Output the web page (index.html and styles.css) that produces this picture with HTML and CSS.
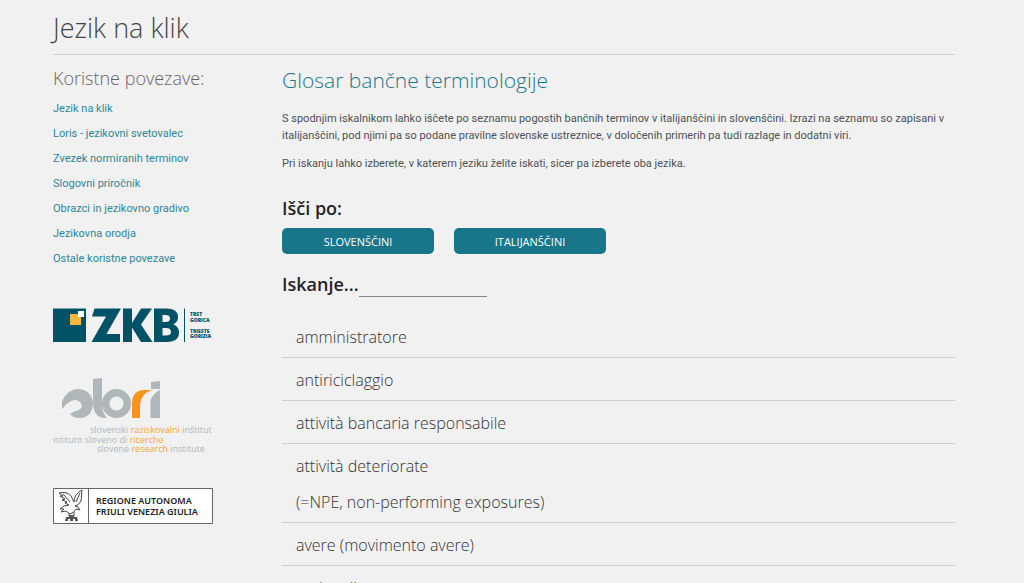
FILE: index.html
```html
<!DOCTYPE html>
<html lang="sl">
<head>
<meta charset="utf-8">
<meta name="viewport" content="width=device-width, initial-scale=1">
<title>Glosar bančne terminologije</title>
<link rel="stylesheet" href="styles.css">
</head>
<body>
<div class="page">
  <header class="page-header">
    <h1 class="site-title">Jezik na klik</h1>
  </header>
  <div class="columns">
    <aside class="sidebar">
      <h2 class="sidebar-title">Koristne povezave:</h2>
      <nav class="links" aria-label="Koristne povezave">
        <a href="#jezik">Jezik na klik</a>
        <a href="#loris">Loris - jezikovni svetovalec</a>
        <a href="#zvezek">Zvezek normiranih terminov</a>
        <a href="#slogovni">Slogovni priročnik</a>
        <a href="#obrazci">Obrazci in jezikovno gradivo</a>
        <a href="#orodja">Jezikovna orodja</a>
        <a href="#ostale">Ostale koristne povezave</a>
      </nav>
      <div class="logos">
        <svg class="logo" viewBox="0 0 160 35" role="img" aria-label="ZKB">
          <path fill="#005366" d="M0 0.500h33v33.500H0z"/>
          <path fill="#fdb73e" d="M17 6h11v11H17z"/>
          <path fill="#fff" d="M25 3h6v6h-6z"/>
          <path fill="#005366" d="M41.500 0.500H68L53.500 26H67v8H38.500L53 8.500H39zM70 0.500h9V15L88 0.500h11L88 16.500 99.500 34H88L79 19.500V34h-9z"/>
          <path fill="#005366" fill-rule="evenodd" d="M101 0.500h12c8 0 12 3 12 8.500 0 4-2 6-5 7.500 4 1 6 4 6 8 0 6-4 9.500-12 9.500h-13zM109.500 7v7h3c3 0 4.500-1 4.500-3.500S115.500 7 112.500 7zM109.500 20v7.500h3.500c3.500 0 5-1 5-3.500 0-2.800-1.500-4-5-4zM131 0.500h1V34h-1z"/>
          <g class="zkb-towns"><text x="137" y="8">TRST</text><text x="137" y="14">GORICA</text><text x="137" y="25">TRIESTE</text><text x="137" y="30">GORIZIA</text></g>
        </svg>
        <svg class="logo" viewBox="0 -1 160 77" role="img" aria-label="Slori">
          <g fill="#b0b7bb">
            <path d="M9 23Q15 11 25 11Q39 12 40 26Q39 40 26 40Q20 40 17 36Q21 33 26 32Q31 29 27 24Q20 18 9 31Z"/>
            <path d="M40 1l9-1v26q0 8 5 14-14 1-14-16z"/>
            <path fill-rule="evenodd" d="M63.500 11a14.500 14.500 0 1 0 14.500 14.500A14.500 14.500 0 0 0 63.500 11zm0 7.500a7 7 0 1 1-7 7 7 7 0 0 1 7-7z"/>
            <path d="M98 4l9-1v8h-9zM97.500 22q3-7 9.500-10v28h-9.500z"/>
          </g>
          <path fill="#f7941e" d="M79 40V26q0-13 11-14h9q-12 4-12 17v11z"/>
          <g class="slori-text">
            <text x="37" y="55">slovenski <tspan>raziskovalni</tspan> inštitut</text>
            <text x="0" y="65">istituto sloveno di <tspan>ricerche</tspan></text>
            <text x="44" y="74">slovene <tspan>research</tspan> institute</text>
          </g>
        </svg>
        <svg class="logo" viewBox="0 0 160 36" role="img" aria-label="Regione Autonoma Friuli Venezia Giulia">
          <path fill="#fff" stroke="#666" d="M0.500 0.500h159v35H0.500zM35.500 0.500v35"/>
          <path class="eagle" d="M6 5q8-2 12 3l3 6q0-8 8-12l-1 11q-2 4-6 5l3 1 2 3-4-1q-2 4-6 5l-4-3-5 1 3-3-4 0 4-3 5-1-4-2 2-1-5-2 3-1-5-3 3 0z"/>
          <path class="eagle" d="M10 6l7 8M27 5l-4 9M16 25v3M21 24v4"/>
          <path fill="#555" d="M12 33l1-4h3v-2h5v2h3l1 4h-3v-2h-2v2h-3v-2h-2v2z"/>
          <g class="region-text"><text x="43" y="16">REGIONE AUTONOMA</text><text x="43" y="27">FRIULI VENEZIA GIULIA</text></g>
        </svg>
      </div>
    </aside>
    <main class="content">
      <h2 class="content-title">Glosar bančne terminologije</h2>
      <p>S spodnjim iskalnikom lahko iščete po seznamu pogostih bančnih terminov v italijanščini in slovenščini. Izrazi na seznamu so zapisani v italijanščini, pod njimi pa so podane pravilne slovenske ustreznice, v določenih primerih pa tudi razlage in dodatni viri.</p>
      <p>Pri iskanju lahko izberete, v katerem jeziku želite iskati, sicer pa izberete oba jezika.</p>
      <h3 class="label">Išči po:</h3>
      <div class="buttons">
        <button type="button">SLOVENŠČINI</button>
        <button type="button">ITALIJANŠČINI</button>
      </div>
      <div class="search">
        <label class="label" for="search">Iskanje...</label>
        <input id="search" type="text">
      </div>
      <ul class="terms">
        <li>amministratore</li>
        <li>antiriciclaggio</li>
        <li>attività bancaria responsabile</li>
        <li>attività deteriorate<span>(=NPE, non-performing exposures)</span></li>
        <li>avere (movimento avere)</li>
        <li>avviso di pagamento</li>
      </ul>
    </main>
  </div>
</div>
</body>
</html>
```
FILE: styles.css
```css
* { box-sizing: border-box; }
html { overflow: hidden; }
body {
  margin: 0;
  height: 100vh;
  overflow: hidden;
  background: #f1f1f1;
  color: #4b5155;
  font-family: "Open Sans", "Noto Sans", sans-serif;
  font-size: 11px;
  line-height: 17px;
}
h1, h2, h3, p, ul { margin: 0; padding: 0; font-weight: 300; }
.page { padding: 8px 69px 0 53px; }
.page-header { border-bottom: 1px solid #d0d0d0; padding-bottom: 6px; }
.site-title { font-size: 27px; line-height: 40px; color: #444; }
.columns { display: grid; grid-template-columns: 160px 1fr; column-gap: 69px; }
.sidebar { padding-top: 11px; }
.sidebar-title { font-size: 18px; line-height: 24px; color: #666; white-space: nowrap; }
.links { display: flex; flex-direction: column; align-items: flex-start; gap: 8px; margin-top: 10px; }
.links a { color: #2d8797; font-family: Roboto, sans-serif; text-decoration: none; white-space: nowrap; }
.logos { display: flex; flex-direction: column; margin-top: 41px; gap: 34px; }
.logo { display: block; width: 100%; overflow: visible; }
.zkb-towns { fill: #005366; font-size: 5px; font-weight: 800; }
.slori-text { fill: #b0b7bb; font-size: 9px; }
.slori-text tspan { fill: #f7a43c; }
.region-text { fill: #222; font-family: "Noto Sans", sans-serif; font-size: 9px; font-weight: 600; }
.eagle { fill: #fff; stroke: #444; }
.content { padding-top: 10px; }
.content-title { font-size: 21px; line-height: 30px; color: #1c7688; margin-bottom: 15px; }
.content p { font-family: Roboto, sans-serif; font-weight: 400; margin-bottom: 11px; }
.label { font-size: 18px; line-height: 26px; font-weight: 600; color: #212529; }
.content h3 { margin-top: 23px; }
.buttons { display: flex; gap: 20px; margin-top: 7px; }
.buttons button {
  width: 152px; height: 26px; padding: 0; border: 0; border-radius: 5px;
  background: #19768a; color: #fff; font: inherit;
}
.search { display: flex; align-items: flex-start; margin-top: 17px; }
.search input {
  width: 128px; height: 26px; border: 0; border-bottom: 1px solid #888;
  background: transparent; font: inherit; outline: 0; padding: 0;
}
.terms { list-style: none; margin-top: 18px; }
.terms li {
  padding: 10px 14px 7px; border-bottom: 1px solid #d0d0d0;
  font-size: 16px; line-height: 25px; font-weight: 300; color: #333;
}
.terms span { display: block; margin-top: 11px; }
```
